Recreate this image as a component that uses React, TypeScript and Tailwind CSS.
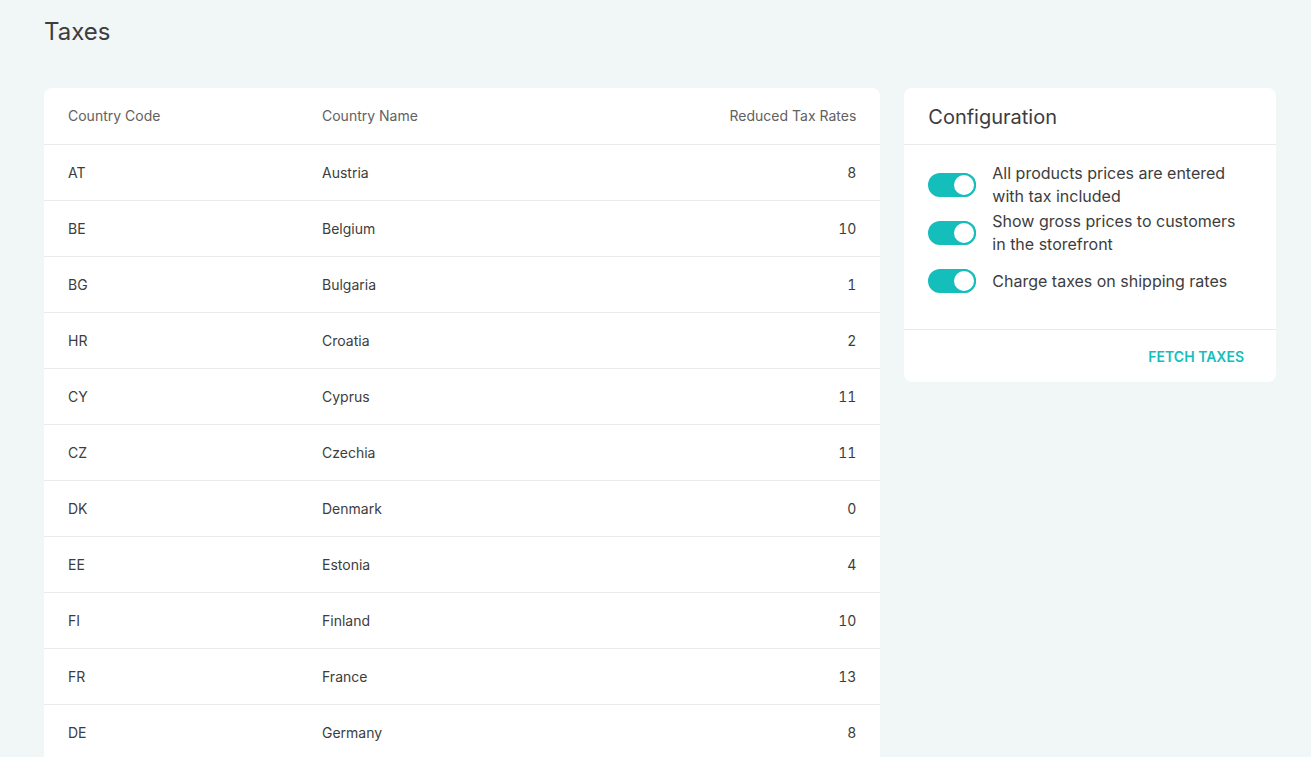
import React from 'react';

const COUNTRIES: { code: string; name: string; rate: number }[] = [
  { code: 'AT', name: 'Austria', rate: 8 },
  { code: 'BE', name: 'Belgium', rate: 10 },
  { code: 'BG', name: 'Bulgaria', rate: 1 },
  { code: 'HR', name: 'Croatia', rate: 2 },
  { code: 'CY', name: 'Cyprus', rate: 11 },
  { code: 'CZ', name: 'Czechia', rate: 11 },
  { code: 'DK', name: 'Denmark', rate: 0 },
  { code: 'EE', name: 'Estonia', rate: 4 },
  { code: 'FI', name: 'Finland', rate: 10 },
  { code: 'FR', name: 'France', rate: 13 },
  { code: 'DE', name: 'Germany', rate: 8 },
  { code: 'GR', name: 'Greece', rate: 6 },
  { code: 'HU', name: 'Hungary', rate: 3 },
  { code: 'IE', name: 'Ireland', rate: 14 },
  { code: 'IT', name: 'Italy', rate: 6 },
];

const OPTIONS = [
  ['All products prices are entered', 'with tax included'],
  ['Show gross prices to customers', 'in the storefront'],
  ['Charge taxes on shipping rates'],
];

const Toggle = () => (
  <span className="relative inline-flex h-6 w-12 shrink-0 items-center rounded-full bg-[#13bebb]">
    <span className="absolute right-0 h-6 w-6 rounded-full border-2 border-[#13bebb] bg-white" />
  </span>
);

export default function App() {
  return (
    <div
      className="min-h-screen bg-[#f1f6f6] pl-[44px] pr-[35px] pt-4 text-[#3d3d3d]"
      style={{ fontFamily: 'Inter, "Noto Sans", sans-serif' }}
    >
      <h1 className="h-[72px] text-[24px] font-normal leading-8 text-[#3d3d3d]">Taxes</h1>

      <div className="grid grid-cols-[9fr_4fr] items-start gap-6">
        <div className="overflow-hidden rounded-lg bg-white">
          <div className="grid h-[57px] grid-cols-[254px_1fr_200px] items-center border-b border-[#eaeaea] px-6 text-sm text-[#616161]">
            <div>Country Code</div>
            <div>Country Name</div>
            <div className="text-right">Reduced Tax Rates</div>
          </div>
          {COUNTRIES.map((c) => (
            <div
              key={c.code}
              className="grid h-14 grid-cols-[254px_1fr_200px] items-center border-b border-[#eaeaea] px-6 text-sm text-[#3d3d3d] last:border-0"
            >
              <div>{c.code}</div>
              <div>{c.name}</div>
              <div className="text-right tabular-nums">{c.rate}</div>
            </div>
          ))}
        </div>

        <div className="rounded-lg bg-white">
          <div className="flex h-[57px] items-center border-b border-[#eaeaea] px-6 pt-px text-[20px] text-[#3d3d3d]">
            <span>Configuration</span>
          </div>
          <div className="px-6 pb-6 pt-4">
            {OPTIONS.map((lines) => (
              <div key={lines[0]} className="flex h-12 items-center gap-4">
                <Toggle />
                <div className="text-base leading-[23px] text-[#3d3d3d]">
                  {lines.map((l) => (
                    <div key={l}>{l}</div>
                  ))}
                </div>
              </div>
            ))}
          </div>
          <div className="flex h-[53px] items-center justify-end border-t border-[#eaeaea] px-6 pt-[2px]">
            <button className="px-2 text-sm font-semibold uppercase text-[#13bebb]">Fetch taxes</button>
          </div>
        </div>
      </div>
    </div>
  );
}
